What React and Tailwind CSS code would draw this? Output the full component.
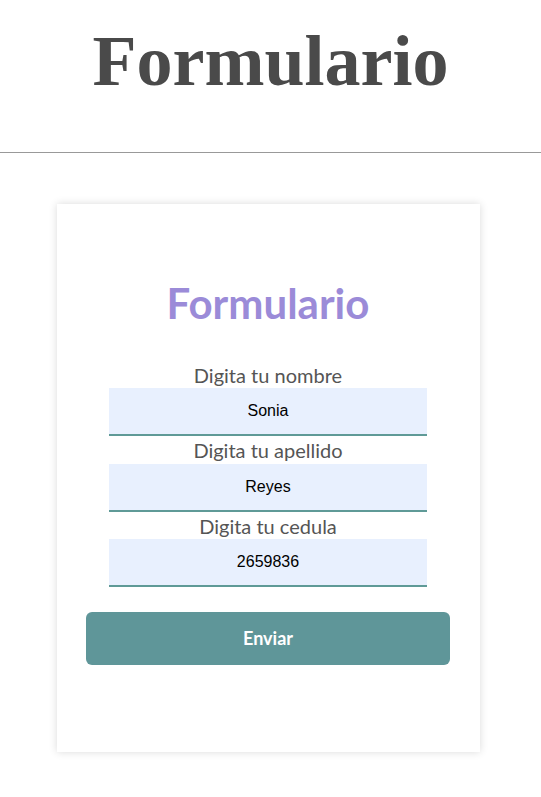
import React, { useState } from "react";

const Field = ({ label, value, onChange }) => (
  <div className="flex flex-col items-center">
    <label className="h-[27.5px] text-[20px] leading-[28px] text-[#555555] font-['Lato',sans-serif]">
      {label}
    </label>
    <input
      value={value}
      onChange={(e) => onChange(e.target.value)}
      className="w-[318px] h-[48px] bg-[#e8f0fe] border-b-2 border-[#5f9a97] text-center text-[16px] text-black outline-none font-['Liberation_Sans',Arial,sans-serif]"
    />
  </div>
);

export default function App() {
  const [nombre, setNombre] = useState("Sonia");
  const [apellido, setApellido] = useState("Reyes");
  const [cedula, setCedula] = useState("2659836");

  return (
    <div className="min-h-screen bg-white">
      {/* Header */}
      <header className="h-[153px] border-b border-[#999999] flex justify-center">
        <h1 className="mt-[13px] text-[72px] leading-[96px] font-bold text-[#4a4a4a] font-['Liberation_Serif','Times_New_Roman',serif]">
          Formulario
        </h1>
      </header>

      {/* Card */}
      <main className="pt-[51px] pb-10">
        <form
          onSubmit={(e) => e.preventDefault()}
          className="ml-[57px] w-[423px] h-[548px] bg-white shadow-[0_0_8px_rgba(0,0,0,0.15)] flex flex-col items-center pl-[29px] pr-[30px]"
        >
          <h2 className="mt-[74px] text-[42px] leading-[50px] font-bold text-[#9b8bd8] font-['Lato',sans-serif]">
            Formulario
          </h2>

          <div className="mt-[32.5px] flex flex-col">
            <Field label="Digita tu nombre" value={nombre} onChange={setNombre} />
            <Field label="Digita tu apellido" value={apellido} onChange={setApellido} />
            <Field label="Digita tu cedula" value={cedula} onChange={setCedula} />
          </div>

          <button
            type="submit"
            className="mt-[25px] w-[364px] h-[53px] rounded-md bg-[#5f9699] text-white text-[18px] font-bold font-['Lato',sans-serif]"
          >
            Enviar
          </button>
        </form>
      </main>
    </div>
  );
}
